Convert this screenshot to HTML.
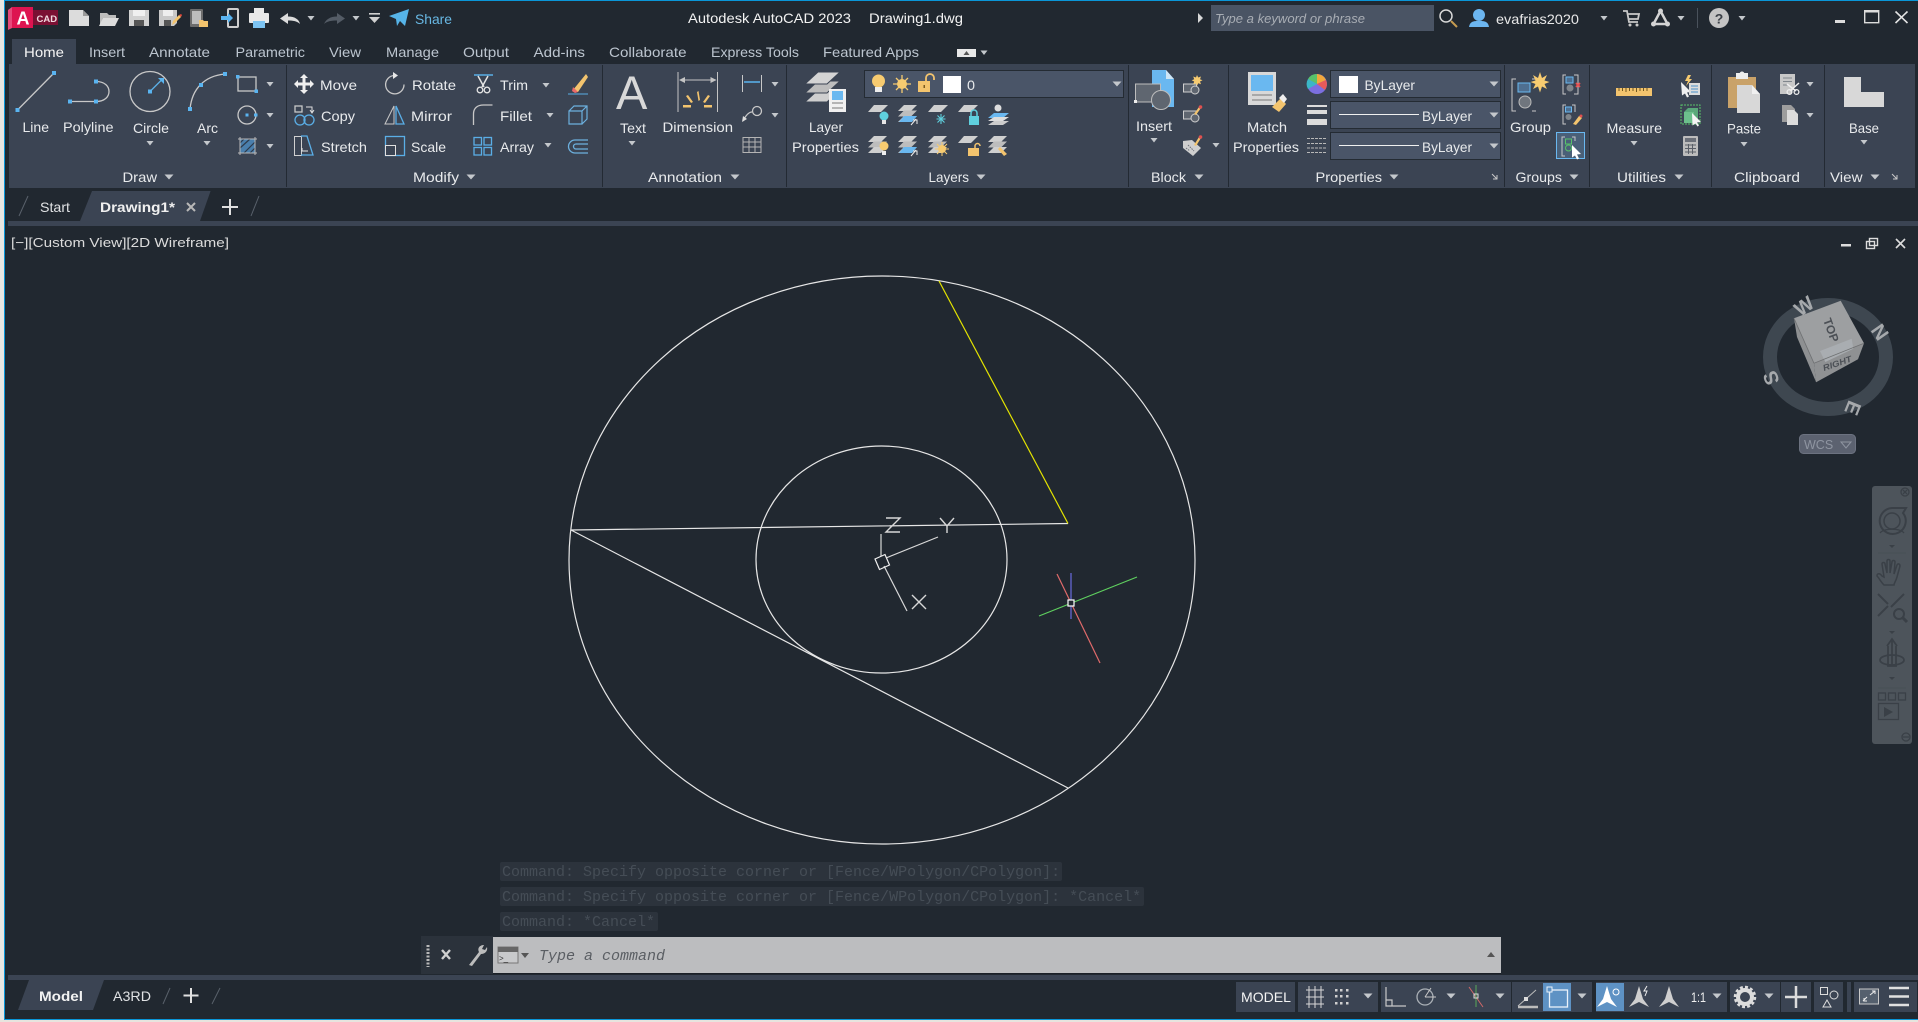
<!DOCTYPE html>
<html><head><meta charset="utf-8"><title>Autodesk AutoCAD 2023</title>
<style>
html,body{margin:0;padding:0;background:#212830;width:1918px;height:1022px;overflow:hidden}
svg{position:absolute;left:0;top:0;display:block}
text{font-family:"Liberation Sans",sans-serif;font-size:14px;fill:#e8eaec}
.tb text{fill:#bcc5cf}
.m{font-family:"Liberation Mono",monospace;font-size:15px;fill:#454d56}
.g{stroke:#c8c8c8;fill:none;stroke-width:1.3}
.b{stroke:#5aaee6;fill:none;stroke-width:1.3}
</style></head><body>
<svg width="1918" height="1022" viewBox="0 0 1918 1022" xmlns="http://www.w3.org/2000/svg">
<defs>
<path id="ar" d="M-3.5-2h7l-3.500 4.500z" fill="#c4c8cc"/>
<path id="ar2" d="M-4.500-2.500h9l-4.500 5z" fill="#c4c8cc"/>
<g id="stk"><path d="M6 0h13l-6 6H0z" fill="#cfcfcf"/><path d="M6 5.500h13l-6 6H0z" fill="#bdbdbd"/><path d="M6 11h13l-6 6H0z" fill="#cfcfcf"/></g>
</defs>
<rect width="1918" height="1022" fill="#212830"/>
<rect x="0" y="0" width="4" height="1022" fill="#e8e6e2"/>
<rect x="4" y="0" width="1914" height="1" fill="#0a96d8"/>
<rect x="4" y="0" width="1" height="1020" fill="#0a96d8"/>
<rect x="4" y="1019" width="1914" height="1" fill="#0a96d8"/>
<rect x="0" y="1020" width="1918" height="2" fill="#e8e4de"/>

<!-- app logo -->
<path d="M8 10l4-3h21v21H12l-4 2z" fill="#e6497b"/><rect x="12" y="7" width="21" height="21" fill="#dd1450"/>
<text x="16.500" y="24.500" style="font-size:18px;font-weight:bold;fill:#fff">A</text>
<rect x="33" y="10" width="25" height="15" fill="#7b1033"/>
<text x="36.500" y="22" style="font-size:9.500px;font-weight:bold;fill:#f0d8de">CAD</text>

<!-- QAT -->
<path d="M69 10h14l6 6v10H69z" fill="#dcdcdc"/><path d="M83 10v6h6" fill="#9a9a9a"/>
<path d="M100 13h7l2 2h7v3h-13l-3 8z" fill="#bcbcbc"/><path d="M103 18h16l-4 8H99z" fill="#dcdcdc"/>
<path d="M129 10h20v16h-20z" fill="#d2d2d2"/><rect x="133" y="10" width="12" height="6" fill="#f0f0f0"/><rect x="134" y="20" width="10" height="6" fill="#555"/>
<path d="M159 10h18v13l-3 3h-15z" fill="#c9c9c9"/><rect x="163" y="10" width="10" height="6" fill="#eee"/><rect x="164" y="20" width="7" height="6" fill="#555"/><path d="M172 25l1-4 6-6 2 2-6 6z" fill="#f3c46e"/><path d="M179 15l2 2 1-2-1-1z" fill="#e64a3c"/>
<rect x="190" y="9" width="13" height="18" rx="1" fill="#6d6d6d"/><rect x="192" y="11" width="9" height="13" fill="#bdbdbd"/><path d="M199 20h4l1 1h4v6h-9z" fill="#f3c46e"/>
<rect x="228" y="9" width="10" height="18" rx="1" fill="none" stroke="#cfcfcf" stroke-width="2"/><path d="M221 16h7v-3l5 5-5 5v-3h-7z" fill="#5ab4f0"/>
<rect x="254" y="8" width="10" height="6" fill="#e8e8e8"/><rect x="249" y="13" width="20" height="10" rx="1" fill="#e8e8e8"/><rect x="253" y="21" width="12" height="7" fill="#7cc3f2"/>
<path d="M280 18.500l8-5.500v3.500c7 0 11 3 12 7.500-3-3-7-3.500-12-3.500v3.500z" fill="#dcdcdc"/>
<use href="#ar" x="311" y="18"/>
<path d="M345 18.500l-8-5.500v3.500c-7 0-11 3-13 7.500 3-3 8-3.500 13-3.500v3.500z" fill="#545c66"/>
<use href="#ar" x="356" y="18"/>
<rect x="369" y="13" width="11" height="1.600" fill="#d0d0d0"/><path d="M369 17h11l-5.500 6z" fill="#d0d0d0"/>
<path d="M409 9l-4 17-5-5-3 5-1-7-7-3z" fill="#56b4e8"/>
<text x="415" y="24" textLength="37" lengthAdjust="spacingAndGlyphs" style="fill:#68b8e4">Share</text>

<!-- title -->
<text x="688" y="23" textLength="163" lengthAdjust="spacingAndGlyphs" style="fill:#f2f2f2">Autodesk AutoCAD 2023</text>
<text x="869" y="23" textLength="94" lengthAdjust="spacingAndGlyphs" style="fill:#f2f2f2">Drawing1.dwg</text>
<path d="M1198 13l5 5-5 5z" fill="#d8d8d8"/>
<rect x="1211" y="5" width="223" height="26" fill="#4a5464"/>
<text x="1215" y="23" textLength="150" lengthAdjust="spacingAndGlyphs" style="font-style:italic;fill:#a8adb4;font-size:13px">Type a keyword or phrase</text>
<circle cx="1446" cy="16" r="6" fill="none" stroke="#d8d8d8" stroke-width="1.500"/><path d="M1451 21l6 6" stroke="#c49a50" stroke-width="2"/>
<circle cx="1479" cy="15" r="6" fill="#6cb6f0"/><path d="M1469 27c1-6 5-6 10-6s9 0 10 6z" fill="#6cb6f0"/>
<text x="1496" y="24" textLength="83" lengthAdjust="spacingAndGlyphs" style="fill:#e8e8e8">evafrias2020</text>
<use href="#ar" x="1604" y="18"/>
<path d="M1623 11h4l2 11h9M1628 14h11l-1 5h-9" fill="none" stroke="#c8c8c8" stroke-width="1.800"/><circle cx="1630" cy="25" r="1.500" fill="#c8c8c8"/><circle cx="1637" cy="25" r="1.500" fill="#c8c8c8"/>
<path d="M1660.500 11l-7 13h14z" fill="none" stroke="#d4d4d4" stroke-width="2.500"/><circle cx="1660.500" cy="11" r="2.500" fill="#d4d4d4"/><circle cx="1653.500" cy="24" r="2.500" fill="#d4d4d4"/><circle cx="1667.500" cy="24" r="2.500" fill="#d4d4d4"/>
<use href="#ar" x="1681" y="18"/>
<rect x="1697" y="8" width="1" height="20" fill="#4a525c"/>
<circle cx="1719" cy="18" r="10" fill="#c4c4c4"/><text x="1719" y="23.500" text-anchor="middle" style="font-weight:bold;fill:#3a3f46">?</text>
<use href="#ar" x="1742" y="18"/>
<rect x="1835" y="20" width="10" height="3" fill="#dcdcdc"/>
<rect x="1864.700" y="10.700" width="14" height="12" fill="none" stroke="#dcdcdc" stroke-width="1.400"/><rect x="1864" y="10" width="15" height="2.500" fill="#dcdcdc"/>
<path d="M1895.500 11.500l12 11.500M1907.500 11.500l-12 11.500" stroke="#e4e4e4" stroke-width="1.600"/>

<!-- ribbon tabs -->
<rect x="12" y="39" width="64" height="25" fill="#3b4453"/>
<text x="24" y="57" textLength="40" lengthAdjust="spacingAndGlyphs" style="fill:#f4f4f4">Home</text>
<g class="tb">
<text x="89" y="57" textLength="36" lengthAdjust="spacingAndGlyphs">Insert</text>
<text x="149" y="57" textLength="61" lengthAdjust="spacingAndGlyphs">Annotate</text>
<text x="235.500" y="57" textLength="69.500" lengthAdjust="spacingAndGlyphs">Parametric</text>
<text x="329" y="57" textLength="32" lengthAdjust="spacingAndGlyphs">View</text>
<text x="386" y="57" textLength="53" lengthAdjust="spacingAndGlyphs">Manage</text>
<text x="463" y="57" textLength="46" lengthAdjust="spacingAndGlyphs">Output</text>
<text x="533.500" y="57" textLength="51.500" lengthAdjust="spacingAndGlyphs">Add-ins</text>
<text x="609" y="57" textLength="77.500" lengthAdjust="spacingAndGlyphs">Collaborate</text>
<text x="711" y="57" textLength="88" lengthAdjust="spacingAndGlyphs">Express Tools</text>
<text x="823" y="57" textLength="96" lengthAdjust="spacingAndGlyphs">Featured Apps</text>
</g>
<rect x="957" y="49" width="19" height="8" fill="#e8e8e8"/><path d="M963.500 55h6l-3-4z" fill="#555"/>
<use href="#ar" x="984" y="52.500"/>

<!-- ribbon panel -->
<rect x="9" y="64" width="1906" height="124" fill="#3b4453"/>
<g fill="#232a33">
<rect x="286" y="65" width="1" height="122"/><rect x="602" y="65" width="1" height="122"/><rect x="786" y="65" width="1" height="122"/><rect x="1128" y="65" width="1" height="122"/><rect x="1228" y="65" width="1" height="122"/><rect x="1504" y="65" width="1" height="122"/><rect x="1589" y="65" width="1" height="122"/><rect x="1711" y="65" width="1" height="122"/><rect x="1824" y="65" width="1" height="122"/>
</g>

<!-- Draw -->
<path d="M17.500 110L54 73" class="g"/>
<rect x="15.500" y="108" width="4" height="4" fill="#5ab4f0"/><rect x="52" y="71" width="4" height="4" fill="#5ab4f0"/>
<path d="M70 101.500h26c9 0 13-5 13-10s-4-10-13-10" class="g"/>
<rect x="68" y="99.500" width="4" height="4" fill="#5ab4f0"/><rect x="94" y="99.500" width="4" height="4" fill="#5ab4f0"/><rect x="94" y="79.500" width="4" height="4" fill="#5ab4f0"/>
<circle cx="150" cy="91.500" r="20" class="g"/><path d="M150 91.500l13-13" class="b"/><path d="M158 78h6v6z" fill="#5ab4f0"/><rect x="148" y="89.500" width="4" height="4" fill="#5ab4f0"/>
<path d="M190 109c2-20 14-33 35-35" class="g"/><rect x="188" y="107" width="4" height="4" fill="#5ab4f0"/><rect x="199" y="83" width="4" height="4" fill="#5ab4f0"/><rect x="223" y="72" width="4" height="4" fill="#5ab4f0"/>
<rect x="238" y="77" width="18" height="14" class="g"/><rect x="236" y="75" width="3.500" height="3.500" fill="#5ab4f0"/><rect x="254.500" y="89.500" width="3.500" height="3.500" fill="#5ab4f0"/>
<circle cx="247" cy="115" r="9" class="g"/><rect x="245.500" y="113.500" width="3" height="3" fill="#5ab4f0"/><rect x="254" y="113.500" width="3.500" height="3" fill="#5ab4f0"/>
<rect x="240" y="139" width="15" height="14" fill="#4f8fc4" opacity=".8"/><path d="M240 148l10-9M244 153l11-11M240 143l4-4M250 153l5-5" stroke="#2e3a4a" stroke-width="1.200"/><path d="M238 139h19M238 153h19M240 137v18M255 137v18" stroke="#b8b8b8" stroke-width="1"/>
<use href="#ar" x="270" y="84"/><use href="#ar" x="270" y="115"/><use href="#ar" x="270" y="146"/>
<text x="22.500" y="132" textLength="26.500" lengthAdjust="spacingAndGlyphs">Line</text>
<text x="63" y="132" textLength="50.500" lengthAdjust="spacingAndGlyphs">Polyline</text>
<text x="133" y="133" textLength="36" lengthAdjust="spacingAndGlyphs">Circle</text>
<text x="197" y="133" textLength="21" lengthAdjust="spacingAndGlyphs">Arc</text>
<use href="#ar" x="150" y="143"/><use href="#ar" x="207" y="143"/>
<text x="122.500" y="182" textLength="34.500" lengthAdjust="spacingAndGlyphs">Draw</text><use href="#ar2" x="169" y="177"/>

<!-- Modify -->
<path d="M304 74l4 4h-2.500v4.500h4.500V80l4 4-4 4v-2.500h-4.500V90h2.500l-4 4-4-4h2.500v-4.500H298V88l-4-4 4-4v2.500h4.500V78H300z" fill="#f0f0f0"/>
<text x="320" y="90" textLength="37" lengthAdjust="spacingAndGlyphs">Move</text>
<rect x="295" y="106" width="7" height="6" class="g"/><path d="M306 107h6v5M310 110l2 3 2-3" stroke="#e0e0e0" fill="none"/><circle cx="300" cy="120" r="5" class="b"/><circle cx="309" cy="120" r="5" class="b"/>
<text x="321" y="121" textLength="34" lengthAdjust="spacingAndGlyphs">Copy</text>
<rect x="294.500" y="136.500" width="7" height="19" fill="none" stroke="#d0d0d0"/><path d="M301 136h6l6 19h-12" class="b"/><path d="M302 148v3h6" stroke="#e8e8e8" fill="none"/>
<text x="321" y="152" textLength="46" lengthAdjust="spacingAndGlyphs">Stretch</text>
<path d="M394 75.500A9.200 9.200 0 1 0 404 84.500" class="g"/><path d="M393 72l5 3.500-5 3.500z" fill="#e8e8e8"/>
<text x="412" y="90" textLength="44" lengthAdjust="spacingAndGlyphs">Rotate</text>
<path d="M385 124l9-18v18z" fill="none" stroke="#c8c8c8"/><path d="M396 106l8 18h-8z" class="b"/>
<text x="411" y="121" textLength="41" lengthAdjust="spacingAndGlyphs">Mirror</text>
<rect x="385.500" y="136.500" width="19" height="19" class="b"/><rect x="385.500" y="145.500" width="10" height="10" fill="#3b4453" stroke="#e0e0e0"/>
<text x="411" y="152" textLength="35" lengthAdjust="spacingAndGlyphs">Scale</text>
<path d="M474 75h19" stroke="#5aaee6" stroke-width="1.500"/><path d="M478 76l6 11M488 76l-6 11" stroke="#e4e4e4" stroke-width="1.500"/><circle cx="480" cy="90" r="2.800" fill="none" stroke="#e4e4e4" stroke-width="1.300"/><circle cx="487" cy="90" r="2.800" fill="none" stroke="#e4e4e4" stroke-width="1.300"/>
<text x="500" y="90" textLength="28" lengthAdjust="spacingAndGlyphs">Trim</text>
<path d="M473.500 125v-11c0-6 4-9 10-9h9" class="g"/>
<text x="500" y="121" textLength="32" lengthAdjust="spacingAndGlyphs">Fillet</text>
<rect x="474" y="137.500" width="7.500" height="7.500" class="b"/><rect x="484" y="137.500" width="7.500" height="7.500" class="b"/><rect x="474" y="147.500" width="7.500" height="7.500" class="b"/><rect x="484" y="147.500" width="7.500" height="7.500" class="b"/>
<text x="500" y="152" textLength="34" lengthAdjust="spacingAndGlyphs">Array</text>
<use href="#ar" x="546" y="85"/><use href="#ar" x="550" y="115"/><use href="#ar" x="548" y="145"/>
<path d="M573 90l13-16 2 3-10 15z" fill="#f3c46e"/><path d="M573 87l5 5-3 1-3-2z" fill="#e86a6a"/><path d="M568 94h20" stroke="#5aaee6"/>
<path d="M569 111h13v13h-13zM569 111l5-5h13v13l-5 5M582 111l5-5" fill="none" stroke="#6cb0de" stroke-width="1.200"/>
<path d="M588 140h-13a6.500 6.500 0 0 0 0 13h13M588 144h-12a2.500 2.500 0 0 0 0 5h12" fill="none" stroke="#6cb0de" stroke-width="1.300"/>
<text x="413" y="182" textLength="46" lengthAdjust="spacingAndGlyphs">Modify</text><use href="#ar2" x="471" y="177"/>

<!-- Annotation -->
<text x="616" y="109" style="font-size:47px;fill:#d8d8d8">A</text>
<text x="620" y="133" textLength="26" lengthAdjust="spacingAndGlyphs">Text</text><use href="#ar" x="632" y="143"/>
<path d="M678 72v40M717.500 72v40" stroke="#c4c4c4"/><path d="M680 80h36" stroke="#c4c4c4"/><path d="M679 80l6-3v6zM716.500 80l-6-3v6z" fill="#c4c4c4"/>
<g fill="#f3c46e"><path d="M697 92l1.500-1 1.500 9-1.500 1z"/><path d="M686 96l2-1 5 7-2 1z"/><path d="M710 96l-2-1-5 7 2 1z"/><rect x="683" y="105" width="8" height="2.500"/><rect x="704" y="105" width="8" height="2.500"/></g>
<text x="662.500" y="132" textLength="70.500" lengthAdjust="spacingAndGlyphs">Dimension</text>
<path d="M742.500 75v17M761.500 75v17" stroke="#c8c8c8"/><path d="M744 82h16" stroke="#5ab4f0" stroke-width="1.500"/><use href="#ar" x="775" y="84"/>
<circle cx="757" cy="111" r="4.500" class="g"/><path d="M752 112c-3 0-6 3-9 9" class="g"/><path d="M742 122l1-6 4 3z" fill="#ddd"/><use href="#ar" x="775" y="115"/>
<rect x="743" y="137.500" width="18" height="15" fill="none" stroke="#b4b4b4"/><path d="M743 142h18M743 147h18M749 137v15M755 137v15" stroke="#b4b4b4"/>
<text x="648" y="182" textLength="74" lengthAdjust="spacingAndGlyphs">Annotation</text><use href="#ar2" x="735" y="177"/>

<!-- Layers -->
<path d="M818 90h22l-13 12h-22z" fill="#cfcfcf" stroke="#3b4453"/><path d="M818 81h22l-13 12h-22z" fill="#bdbdbd" stroke="#3b4453"/><path d="M818 72h22l-13 12h-22z" fill="#d4d4d4" stroke="#3b4453"/>
<rect x="829" y="89" width="17" height="23" fill="#f0f0f0"/><rect x="832" y="91" width="11" height="9" fill="#6ab8f0"/><path d="M832 103h11M832 108h11" stroke="#777"/>
<text x="809" y="132" textLength="34" lengthAdjust="spacingAndGlyphs">Layer</text>
<text x="792" y="152" textLength="67" lengthAdjust="spacingAndGlyphs">Properties</text>
<rect x="864.500" y="70.500" width="259" height="27" fill="#4a5568" stroke="#242b33"/>
<circle cx="878.500" cy="81" r="6.500" fill="#f7cb70"/><rect x="875" y="87" width="7" height="5" fill="#eee"/>
<circle cx="902" cy="84" r="5" fill="#f7cb70"/><path d="M902 75v18M893 84h18M896 78l12 12M908 78l-12 12" stroke="#f7cb70" stroke-width="1.300"/>
<rect x="918" y="81" width="12" height="11" fill="#f3c46e"/><path d="M926 81v-3a4 4 0 0 1 8 0v2" fill="none" stroke="#f3c46e" stroke-width="1.800"/><rect x="923.500" y="85" width="1.500" height="3" fill="#7a5a20"/>
<rect x="943" y="76" width="18" height="17" fill="#fff"/>
<text x="967" y="90" textLength="8" lengthAdjust="spacingAndGlyphs">0</text>
<use href="#ar2" x="1117" y="84"/>
<!-- layer small icons row1 -->
<path d="M874 105h14l-7 7h-13z" fill="#cfcfcf"/><circle cx="884" cy="116" r="4.500" fill="#5fd0de"/><rect x="882" y="120" width="4" height="4" fill="#e6e6e6"/>
<use href="#stk" x="898" y="105"/><path d="M904 116h13l-5 6h-13z" fill="#6ab8f0"/><path d="M911 125l5-6M913 120h4v4" stroke="#eee" fill="none"/>
<path d="M934 105h14l-7 7h-13z" fill="#cfcfcf"/><path d="M941 114v10M936.500 119h9M937.500 115.500l7 7M944.500 115.500l-7 7" stroke="#5fd0de" stroke-width="1.100"/>
<path d="M964 105h14l-7 7h-13z" fill="#cfcfcf"/><rect x="969" y="116" width="10" height="9" fill="#5fd0de"/><path d="M971 116v-3a3 3 0 0 1 6 0v3" fill="none" stroke="#5fd0de" stroke-width="1.500"/>
<circle cx="998" cy="108" r="3.500" fill="#ddd"/><path d="M994 113h15l-6 5h-15z" fill="#6ab8f0"/><path d="M994 117h15l-6 4h-15z" fill="#ddd"/><path d="M994 121h15l-6 4h-15z" fill="#ccc"/>
<!-- row2 -->
<use href="#stk" x="868" y="136"/><circle cx="884" cy="146" r="4.500" fill="#f7cb70"/><rect x="882" y="151" width="4" height="4" fill="#eee"/>
<use href="#stk" x="898" y="136"/><path d="M904 147h13l-5 6h-13z" fill="#6ab8f0"/><path d="M911 156l5-6M913 151h4v4" stroke="#eee" fill="none"/>
<use href="#stk" x="928" y="136"/><circle cx="942" cy="149" r="4" fill="#f7cb70"/><path d="M942 142v14M935 149h14M937 144l10 10M947 144l-10 10" stroke="#f7cb70"/>
<path d="M964 136h14l-7 7h-13z" fill="#cfcfcf"/><rect x="968" y="148" width="11" height="8" fill="#f3c46e"/><path d="M975 148v-2a2.500 2.500 0 0 1 5 0" fill="none" stroke="#f3c46e" stroke-width="1.500"/>
<use href="#stk" x="988" y="136"/><path d="M1000 147l7 7-3 2-6-7z" fill="#f3c46e"/>
<text x="928.500" y="182" textLength="40.500" lengthAdjust="spacingAndGlyphs">Layers</text><use href="#ar2" x="981" y="177"/>

<!-- Block -->
<path d="M1152 70h14l8 9v28h-22z" fill="#6ab8f0"/><path d="M1166 70v9h8" fill="#cfe6f6"/>
<rect x="1135.500" y="84" width="25" height="18" fill="#5f6670" stroke="#bdbdbd"/><circle cx="1161" cy="100" r="9.500" fill="#5f6670" stroke="#bdbdbd"/><rect x="1134" y="100" width="3" height="3" fill="#eee"/>
<text x="1136" y="131" textLength="36" lengthAdjust="spacingAndGlyphs">Insert</text><use href="#ar" x="1154" y="140"/>
<rect x="1183.500" y="84" width="13" height="8" fill="#5f6670" stroke="#cfcfcf"/><circle cx="1195" cy="90" r="4" fill="#5f6670" stroke="#cfcfcf"/><path d="M1197 75l1.200 2.500 2.800-1-1 2.800 2.500 1-2.500 1.200 1 2.800-2.800-1-1.200 2.500-1-2.500-2.800 1 1-2.800-2.500-1.200 2.500-1-1-2.800 2.800 1z" fill="#f7cb70"/>
<rect x="1183.500" y="111" width="13" height="8" fill="#5f6670" stroke="#cfcfcf"/><circle cx="1195" cy="118" r="4" fill="#5f6670" stroke="#cfcfcf"/><path d="M1194 114l5-7 2 1-5 7z" fill="#f3c46e"/><circle cx="1200.500" cy="107" r="1.800" fill="#e05050"/>
<path d="M1183 141l9-1 9 8-8 8-10-8z" fill="#cfcfcf"/><path d="M1188 145l6 6M1186 148l4 3" stroke="#6a6f78" stroke-dasharray="1.500 1"/><path d="M1194 145l5-8 2 1-5 8z" fill="#f3c46e"/><circle cx="1200.500" cy="137" r="1.800" fill="#e05050"/>
<use href="#ar" x="1216" y="145"/>
<text x="1151" y="182" textLength="35" lengthAdjust="spacingAndGlyphs">Block</text><use href="#ar2" x="1199" y="177"/>

<!-- Properties -->
<rect x="1248" y="72" width="28" height="33" fill="#d8d8d8"/><rect x="1251" y="75" width="22" height="16" fill="#6ab8f0"/><path d="M1252 95h20M1252 100h20" stroke="#777"/>
<path d="M1272 107l9-9 5 6-7 8z" fill="#f3c46e"/><path d="M1279 98l4-4 4 5-3 4z" fill="#eee"/>
<text x="1247" y="132" textLength="40" lengthAdjust="spacingAndGlyphs">Match</text>
<text x="1233" y="152" textLength="66" lengthAdjust="spacingAndGlyphs">Properties</text>
<circle cx="1317" cy="84" r="10" fill="#7c6fe0"/><path d="M1317 84v-10a10 10 0 0 1 9 6z" fill="#f1a83c"/><path d="M1317 84l9-4a10 10 0 0 1-1 10z" fill="#e85a5a"/><path d="M1317 84l-9-5a10 10 0 0 1 9-5z" fill="#58c26a"/><path d="M1317 84l-9-5a10 10 0 0 0 0 10z" fill="#3bb6c8"/>
<path d="M1307 105h20v2h-20z" fill="#dcdcdc"/><path d="M1307 110h20v4h-20z" fill="#dcdcdc"/><path d="M1307 119h20v6h-20z" fill="#dcdcdc"/>
<path d="M1307 138.500h20M1307 143.500h20M1307 148h20M1307 152.500h20" stroke="#b8b8b8" stroke-dasharray="3 1"/>
<rect x="1330.500" y="70.500" width="170" height="27" fill="#4a5568" stroke="#242b33"/>
<rect x="1330.500" y="101.500" width="170" height="27" fill="#4a5568" stroke="#242b33"/>
<rect x="1330.500" y="132.500" width="170" height="27" fill="#4a5568" stroke="#242b33"/>
<rect x="1339" y="76" width="19" height="17" fill="#fff"/>
<text x="1364.500" y="90" textLength="50.500" lengthAdjust="spacingAndGlyphs">ByLayer</text>
<rect x="1339" y="114" width="80" height="1" fill="#f0f0f0"/>
<text x="1422" y="121" textLength="50" lengthAdjust="spacingAndGlyphs">ByLayer</text>
<rect x="1339" y="145" width="80" height="1" fill="#f0f0f0"/>
<text x="1422" y="152" textLength="50" lengthAdjust="spacingAndGlyphs">ByLayer</text>
<use href="#ar2" x="1494" y="84"/><use href="#ar2" x="1494" y="115"/><use href="#ar2" x="1494" y="146"/>
<text x="1315.500" y="182" textLength="66.500" lengthAdjust="spacingAndGlyphs">Properties</text><use href="#ar2" x="1394" y="177"/>
<path d="M1492 174l5 5M1497 175v4h-4" stroke="#c8c8c8" fill="none"/>

<!-- Groups -->
<path d="M1516 79h-4v32h4M1532 79h3M1536 111h-4" stroke="#c8c8c8" fill="none"/>
<rect x="1518" y="83" width="12" height="9" fill="#4f6f90" stroke="#6ab8f0"/><circle cx="1525" cy="102" r="6" fill="#70767e" stroke="#bbb"/>
<path d="M1540 72l2 6 5-3-2.500 5.500 5 1.500-5 2 2.500 5-5-2.500-2 6-2-6-5 2.500 2.500-5-5-2 5-1.500-2.500-5.500 5 3z" fill="#f7cb70"/>
<text x="1510" y="132" textLength="41" lengthAdjust="spacingAndGlyphs">Group</text>
<path d="M1566 75h-3v19h3M1574 75h4v19h-4" stroke="#c8c8c8" fill="none"/><rect x="1566" y="77" width="7" height="6" fill="#4f6f90" stroke="#6ab8f0"/><circle cx="1570" cy="88" r="3.500" fill="#80868c"/><path d="M1576 83l4 4M1580 83l-4 4" stroke="#e85050" stroke-width="1.800"/>
<path d="M1566 105h-3v19h3M1572 105h3v7" stroke="#c8c8c8" fill="none"/><rect x="1565.500" y="107" width="6" height="5" fill="#4f6f90" stroke="#6ab8f0"/><circle cx="1568.500" cy="117" r="3" fill="#80868c"/><path d="M1573 124l6-8 3 2-6 7z" fill="#f3c46e"/><circle cx="1581" cy="116" r="1.500" fill="#e05050"/>
<rect x="1556.500" y="132.500" width="28" height="26" fill="#4a6078" stroke="#6ab8f0"/>
<path d="M1565 137h-3v19h3M1572 137h3v4" stroke="#c8c8c8" fill="none"/><rect x="1565.500" y="139" width="6" height="5" fill="none" stroke="#58c26a"/><circle cx="1568.500" cy="148" r="3" fill="none" stroke="#58c26a"/><path d="M1572 145l9 9-4 .5 2 4-2 1-2-4-3 2z" fill="#fff"/>
<text x="1515.500" y="182" textLength="46.500" lengthAdjust="spacingAndGlyphs">Groups</text><use href="#ar2" x="1574" y="177"/>

<!-- Utilities -->
<rect x="1616" y="88" width="36" height="8" fill="#f3c46e"/><path d="M1619 88v3M1622.500 88v3M1626 88v4M1629.500 88v3M1633 88v3M1636.500 88v4M1640 88v3M1643.500 88v3M1647 88v3" stroke="#70581f"/>
<text x="1606.500" y="133" textLength="55.500" lengthAdjust="spacingAndGlyphs">Measure</text><use href="#ar" x="1634" y="143"/>
<path d="M1681 82l10 10-4 .5 2 4-2 1-2-4-3 2z" fill="#f0f0f0"/><path d="M1688 75l-3 6h3l-2 5 6-7h-3l2-4z" fill="#f7cb70"/><rect x="1689" y="83" width="11" height="12" fill="#dcdcdc"/><path d="M1691 86h7M1691 89h7M1691 92h7" stroke="#4a90c8"/>
<rect x="1681" y="105" width="19" height="19" fill="none" stroke="#58c26a" stroke-dasharray="2 1"/><path d="M1684 112l4-4h10v12l-4 3h-10z" fill="#5aa87a"/><rect x="1684" y="112" width="10" height="11" fill="#6cc08c"/><path d="M1692 113l9 9-4 .5 2 3-1.500 1-2-3-3 2z" fill="#f4f4f4"/>
<rect x="1683" y="136" width="15" height="20" rx="1" fill="#bcbcbc"/><rect x="1685" y="138" width="11" height="4" fill="#6b7079"/><path d="M1685 145h11M1685 148.500h11M1685 152h11M1688.500 144v10M1692.500 144v10" stroke="#5a5f68"/>
<text x="1617" y="182" textLength="49" lengthAdjust="spacingAndGlyphs">Utilities</text><use href="#ar2" x="1679" y="177"/>

<!-- Clipboard -->
<rect x="1728" y="77" width="28" height="31" fill="#c9a269"/><rect x="1736" y="73" width="12" height="6" fill="#eee"/><circle cx="1742" cy="74" r="2.500" fill="#eee"/>
<path d="M1737 85h15l8 9v19h-23z" fill="#d8d8d8"/><path d="M1752 85v9h8" fill="#f0f0f0"/>
<text x="1727" y="133.500" textLength="34" lengthAdjust="spacingAndGlyphs">Paste</text><use href="#ar" x="1744" y="144"/>
<path d="M1780 74h15v12l-4 8h-11z" fill="#c8c8c8"/><path d="M1783 78h9M1783 81.500h9M1783 85h6" stroke="#80868c"/><path d="M1787 84l9 7M1799 83l-9 8" stroke="#eee" stroke-width="1.500"/><circle cx="1789.500" cy="92" r="2.400" fill="none" stroke="#eee" stroke-width="1.300"/><circle cx="1796.500" cy="92" r="2.400" fill="none" stroke="#eee" stroke-width="1.300"/>
<use href="#ar" x="1810" y="84"/>
<path d="M1782 105h9l4 4v13h-13z" fill="#9d9d9d"/><path d="M1787 110h7l4 4v11h-11z" fill="#dcdcdc"/>
<use href="#ar" x="1810" y="115"/>
<text x="1734" y="182" textLength="66" lengthAdjust="spacingAndGlyphs">Clipboard</text>

<!-- View -->
<path d="M1844 77h17v15h23v15h-40z" fill="#d8d8d8"/>
<text x="1849" y="133" textLength="30" lengthAdjust="spacingAndGlyphs">Base</text><use href="#ar" x="1864" y="142"/>
<text x="1830" y="182" textLength="32.500" lengthAdjust="spacingAndGlyphs">View</text><use href="#ar2" x="1875" y="177"/>
<path d="M1892 174l5 5M1897 175v4h-4" stroke="#c8c8c8" fill="none"/>

<!-- doc tabs -->
<path d="M19 216l9-20" stroke="#59616b"/>
<text x="40" y="212" textLength="30" lengthAdjust="spacingAndGlyphs" style="fill:#e0e2e4">Start</text>
<path d="M92 191h118.600L200 221H80z" fill="#3b4453"/>
<text x="100" y="212" textLength="75" lengthAdjust="spacingAndGlyphs" style="font-weight:bold;fill:#f0f0f0">Drawing1*</text>
<path d="M187 203l8 8M195 203l-8 8" stroke="#b8b8b8" stroke-width="2"/>
<path d="M230 199v16M222 207h16" stroke="#e0e0e0" stroke-width="2"/>
<path d="M251 216l8-20" stroke="#59616b"/>
<rect x="8" y="221" width="1910" height="5" fill="#3b4453"/>

<!-- viewport label -->
<text x="11" y="247" textLength="218" lengthAdjust="spacingAndGlyphs" style="font-size:13px;fill:#dcdcdc">[−][Custom View][2D Wireframe]</text>
<rect x="1841" y="244" width="10" height="2.500" fill="#dcdcdc"/>
<rect x="1866.500" y="241.500" width="8" height="7" fill="none" stroke="#dcdcdc" stroke-width="1.400"/><rect x="1869.500" y="238.500" width="8" height="7" fill="none" stroke="#dcdcdc" stroke-width="1.400"/>
<path d="M1896 239l9 9M1905 239l-9 9" stroke="#dcdcdc" stroke-width="1.600"/>

<!-- drawing -->
<g fill="none" stroke="#e6e6e6" stroke-width="1.200">
<ellipse cx="882" cy="560" rx="313" ry="284"/>
<ellipse cx="881.500" cy="559.500" rx="125.500" ry="113.500"/>
<path d="M571 530L1068 523.500M571 530L1068 788"/>
</g>
<path d="M939 281L1068 523.500" stroke="#e4e400" stroke-width="1.200" fill="none"/>
<g fill="none" stroke="#d8d8d8" stroke-width="1.200">
<path d="M881 534v22"/>
<path d="M886 558L938 537"/>
<path d="M884 566L907 611"/>
<path d="M875 559l10-4.500 4.500 10.500-10 4.500z" stroke="#f0f0f0"/>
<path d="M886 518h14l-14 14h14" stroke-width="1.400"/>
<path d="M940 518l7 8 7-8M947 526v7" stroke-width="1.400"/>
<path d="M912 595l14 14M926 595l-14 14" stroke-width="1.400"/>
</g>
<path d="M1071 573v46" stroke="#6a6ae0" stroke-width="1.200"/>
<path d="M1057 574L1100 663" stroke="#e06a6a" stroke-width="1.200"/>
<path d="M1039 616L1137 577" stroke="#5fd05f" stroke-width="1.200"/>
<rect x="1068" y="600" width="6" height="6" fill="#212830" stroke="#fff" stroke-width="1.200"/>

<!-- viewcube -->
<path fill-rule="evenodd" fill="#3e4750" d="M1763 357a65 59 0 1 0 130 0a65 59 0 1 0-130 0zM1777 357a51 45 0 1 1 102 0a51 45 0 1 1-102 0z"/>
<path d="M1794 318.300l46.700-17.600L1864 343.300l-50 20z" fill="#9d9fa1"/>
<path d="M1794 318.300l20 45 2 18.700-19-45z" fill="#8e9092"/>
<path d="M1814 363.300l50-20-6 16-42 23z" fill="#8f9193"/>
<path d="M1820 351l31.700-12.300 1.600 10-28 13.300z" fill="#a9adb1"/>
<path d="M1794 318.300l20 45M1814 363.300l50-20" stroke="#6f7173" fill="none" stroke-width=".8"/>
<text transform="translate(1823 320) rotate(70)" style="font-size:12px;font-weight:bold;fill:#4c5056">TOP</text>
<text transform="translate(1824 371) rotate(-19)" style="font-size:8.500px;font-weight:bold;font-style:italic;fill:#4c5056" textLength="30" lengthAdjust="spacingAndGlyphs">RIGHT</text>
<text transform="translate(1804 306) rotate(-35)" y="7" text-anchor="middle" style="font-size:20px;font-weight:bold;fill:#a6a9ac">W</text>
<text transform="translate(1880 332) rotate(55)" y="7" text-anchor="middle" style="font-size:20px;font-weight:bold;fill:#a6a9ac">N</text>
<text transform="translate(1853 408) rotate(112)" y="7" text-anchor="middle" style="font-size:20px;font-weight:bold;fill:#a6a9ac">E</text>
<text transform="translate(1771 378) rotate(-112)" y="7" text-anchor="middle" style="font-size:20px;font-weight:bold;fill:#a6a9ac">S</text>
<rect x="1799.500" y="434.500" width="56" height="19" rx="4" fill="#5c6270" stroke="#6c7280"/>
<text x="1804" y="449" style="font-size:12.500px;fill:#8f95a1">WCS</text>
<path d="M1841 442h10l-5 6z" fill="none" stroke="#8f95a1"/>

<!-- navbar -->
<rect x="1872" y="486" width="40" height="258" rx="3" fill="#4d545b"/>
<g fill="none" stroke="#3a4047" stroke-width="1.300">
<circle cx="1905" cy="492" r="4"/><path d="M1903 490l4 4M1907 490l-4 4"/>
<path d="M1892 508a13 13 0 1 0 11 5l3-5z" stroke-width="2"/><circle cx="1892" cy="521" r="8" stroke-width="1.500"/><path d="M1880 533c4-5 20-5 24 0"/>
<path d="M1878 553h28" stroke="#444b52" stroke-width=".6"/>
<path d="M1884 585c-3-3-5-7-7-9 0-3 3-3 5 0l2 1-2-13c0-2 3-2 3 0l2 9v-12c0-2 3-2 3 0v12l2-11c0-2 3-2 3 0l-1 12 3-9c1-2 3-1 3 1l-3 11c-1 4-3 6-3 8z" stroke-width="1.500"/>
<path d="M1878 594l10 10M1904 594l-10 10-3 3M1878 616l10-10" stroke-width="2"/><circle cx="1899" cy="614" r="5" stroke-width="2"/><path d="M1903 618l4 4" stroke-width="3"/>
<path d="M1892 640v26M1887 646l5-7 5 7M1888 646v20h8v-20" stroke-width="1.800"/><ellipse cx="1892" cy="660" rx="12" ry="5" stroke-width="1.800"/>
<path d="M1878 688h28" stroke="#444b52" stroke-width=".6"/>
<rect x="1878.500" y="693" width="7" height="7"/><rect x="1888.500" y="693" width="7" height="7"/><rect x="1898.500" y="693" width="7" height="7"/>
<rect x="1878.500" y="703.500" width="20" height="16"/>
<circle cx="1906" cy="737" r="4"/><path d="M1903 737h6"/>
</g>
<path d="M1889 545h6l-3 3zM1889 631h6l-3 3zM1889 677h6l-3 3z" fill="#3a4047"/>
<path d="M1884 707l9 5-9 5z" fill="#3a4047"/>

<!-- command -->
<rect x="500" y="862" width="562" height="19" rx="2" fill="#2c333c"/>
<rect x="500" y="887" width="644" height="19" rx="2" fill="#2c333c"/>
<rect x="500" y="912" width="158" height="19" rx="2" fill="#2c333c"/>
<text class="m" x="502" y="876">Command: Specify opposite corner or [Fence/WPolygon/CPolygon]:</text>
<text class="m" x="502" y="901">Command: Specify opposite corner or [Fence/WPolygon/CPolygon]: *Cancel*</text>
<text class="m" x="502" y="926">Command: *Cancel*</text>
<rect x="421" y="936" width="72" height="38" fill="#2b323b"/>
<rect x="493" y="937" width="1008" height="37" fill="#bcbdbf"/>
<rect x="493" y="973" width="1008" height="1" fill="#1b2027"/>
<path d="M428 945v22" stroke="#b8b8b8" stroke-width="3" stroke-dasharray="2 1.500"/>
<path d="M442 950l8 9M450 950l-8 9" stroke="#cfcfcf" stroke-width="2.400"/>
<path d="M469 965l10-13c-2-4 1-7 5-7l-2 4 3 1 2-3c1 4-2 7-6 7l-9 12z" fill="#bcbcbc"/>
<rect x="498" y="947" width="20" height="16" fill="#c8c9cb" stroke="#777"/><rect x="498" y="947" width="20" height="5" fill="#666"/><text x="499" y="961" style="font-size:8px;fill:#333">&gt;_</text>
<path d="M521 953h8l-4 5z" fill="#555"/>
<text class="m" x="539" y="960" style="font-style:italic;fill:#5a5e63">Type a command</text>
<path d="M1487 957h8l-4-5z" fill="#555"/>

<!-- bottom bar -->
<rect x="8" y="975" width="1910" height="5" fill="#3b4453"/>
<path d="M29 980h75L93 1010H18z" fill="#3b4453"/>
<text x="39" y="1001" textLength="44" lengthAdjust="spacingAndGlyphs" style="font-weight:bold;fill:#f2f2f2">Model</text>
<text x="113" y="1001" textLength="38" lengthAdjust="spacingAndGlyphs" style="fill:#e0e2e4">A3RD</text>
<path d="M163 1004l7-16" stroke="#59616b"/>
<path d="M191 988v15M183.500 995.500h15" stroke="#e0e0e0" stroke-width="2"/>
<path d="M212 1004l8-16" stroke="#59616b"/>

<!-- status bar -->
<g fill="#3b4453">
<rect x="1236" y="982" width="59" height="30"/><rect x="1298" y="982" width="80" height="30"/><rect x="1381" y="982" width="130" height="30"/><rect x="1512" y="982" width="80" height="30"/><rect x="1596" y="982" width="131" height="30"/><rect x="1730" y="982" width="50" height="30"/><rect x="1781" y="982" width="30" height="30"/><rect x="1814" y="982" width="29" height="30"/><rect x="1847" y="982" width="4" height="30"/><rect x="1854" y="982" width="63" height="30"/>
</g>
<rect x="1543" y="983" width="28" height="28" fill="#5e92c4"/><rect x="1596" y="983" width="28" height="28" fill="#5e92c4"/>
<text x="1241" y="1002" textLength="50" lengthAdjust="spacingAndGlyphs" style="fill:#f4f4f4">MODEL</text>
<path d="M1306 997h18M1306 990h18M1306 1004h18M1309 986v22M1315 986v22M1321 986v22" stroke="#d8d8d8"/>
<g fill="#d0d0d0"><rect x="1335" y="989" width="2.500" height="2.500"/><rect x="1340" y="989" width="2.500" height="2.500"/><rect x="1346" y="989" width="2.500" height="2.500"/><rect x="1335" y="995" width="2.500" height="2.500"/><rect x="1340" y="995" width="2.500" height="2.500"/><rect x="1346" y="995" width="2.500" height="2.500"/><rect x="1335" y="1002" width="2.500" height="2.500"/><rect x="1340" y="1002" width="2.500" height="2.500"/><rect x="1346" y="1002" width="2.500" height="2.500"/></g>
<use href="#ar2" x="1368" y="996"/>
<path d="M1386 987v19h20M1386 1000h6v6" stroke="#c8c8c8" fill="none" stroke-width="1.200"/>
<circle cx="1425" cy="997" r="8" fill="none" stroke="#aab0b6" stroke-width="1.300"/><path d="M1425 997l6-9M1425 997h11" stroke="#c8c8c8"/>
<use href="#ar2" x="1451" y="996"/>
<path d="M1469 987l14 20" stroke="#d06868"/><path d="M1476 985v22" stroke="#58a85a"/><rect x="1474" y="994" width="4" height="4" fill="none" stroke="#ddd"/>
<use href="#ar2" x="1500" y="996"/>
<path d="M1518 1006l18-16" stroke="#bcbcbc"/><path d="M1518 1007h20" stroke="#bcbcbc" stroke-width="2.500"/><rect x="1524" y="997" width="4" height="4" fill="#ddd"/>
<rect x="1549.500" y="990" width="18" height="17" fill="none" stroke="#eaf2fa" stroke-width="1.300"/><rect x="1547" y="987" width="5" height="5" fill="#5e92c4" stroke="#eaf2fa"/>
<use href="#ar2" x="1582" y="996"/>
<path d="M1607 986l4 13 6 8-10-5-10 5 6-8z" fill="#fff"/><circle cx="1616" cy="992" r="3" fill="none" stroke="#fff"/>
<path d="M1639 986l4 13 6 8-10-5-10 5 6-8z" fill="#cfcfcf"/><path d="M1647 986l-3 5h3l-2 5" stroke="#eee" fill="none"/>
<path d="M1669 986l4 13 6 8-10-5-10 5 6-8z" fill="#cfcfcf"/>
<text x="1691" y="1002" textLength="15" lengthAdjust="spacingAndGlyphs" style="fill:#f0f0f0">1:1</text>
<use href="#ar2" x="1717" y="996"/>
<circle cx="1745" cy="997" r="7" fill="none" stroke="#dcdcdc" stroke-width="4"/><circle cx="1745" cy="997" r="10" fill="none" stroke="#dcdcdc" stroke-width="2.500" stroke-dasharray="3 2.200"/>
<use href="#ar2" x="1769" y="996"/>
<path d="M1796 986v22M1785 997h22" stroke="#dcdcdc" stroke-width="2.500"/>
<rect x="1820.500" y="987.500" width="7" height="7" fill="none" stroke="#dcdcdc"/><circle cx="1834" cy="995" r="4" fill="none" stroke="#dcdcdc"/><path d="M1827 1000l-4 7h8z" fill="none" stroke="#dcdcdc"/>
<rect x="1859.500" y="989" width="19" height="15" fill="#55606e" stroke="#c8c8c8"/><path d="M1870 995l5-4M1872 991h3v3" stroke="#eee" fill="none"/><path d="M1863 1001l4-4M1864 998v3h3" stroke="#eee" fill="none"/>
<path d="M1889 988h20M1889 996.500h20M1889 1005h20" stroke="#e0e0e0" stroke-width="2.400"/>
</svg>
</body></html>
